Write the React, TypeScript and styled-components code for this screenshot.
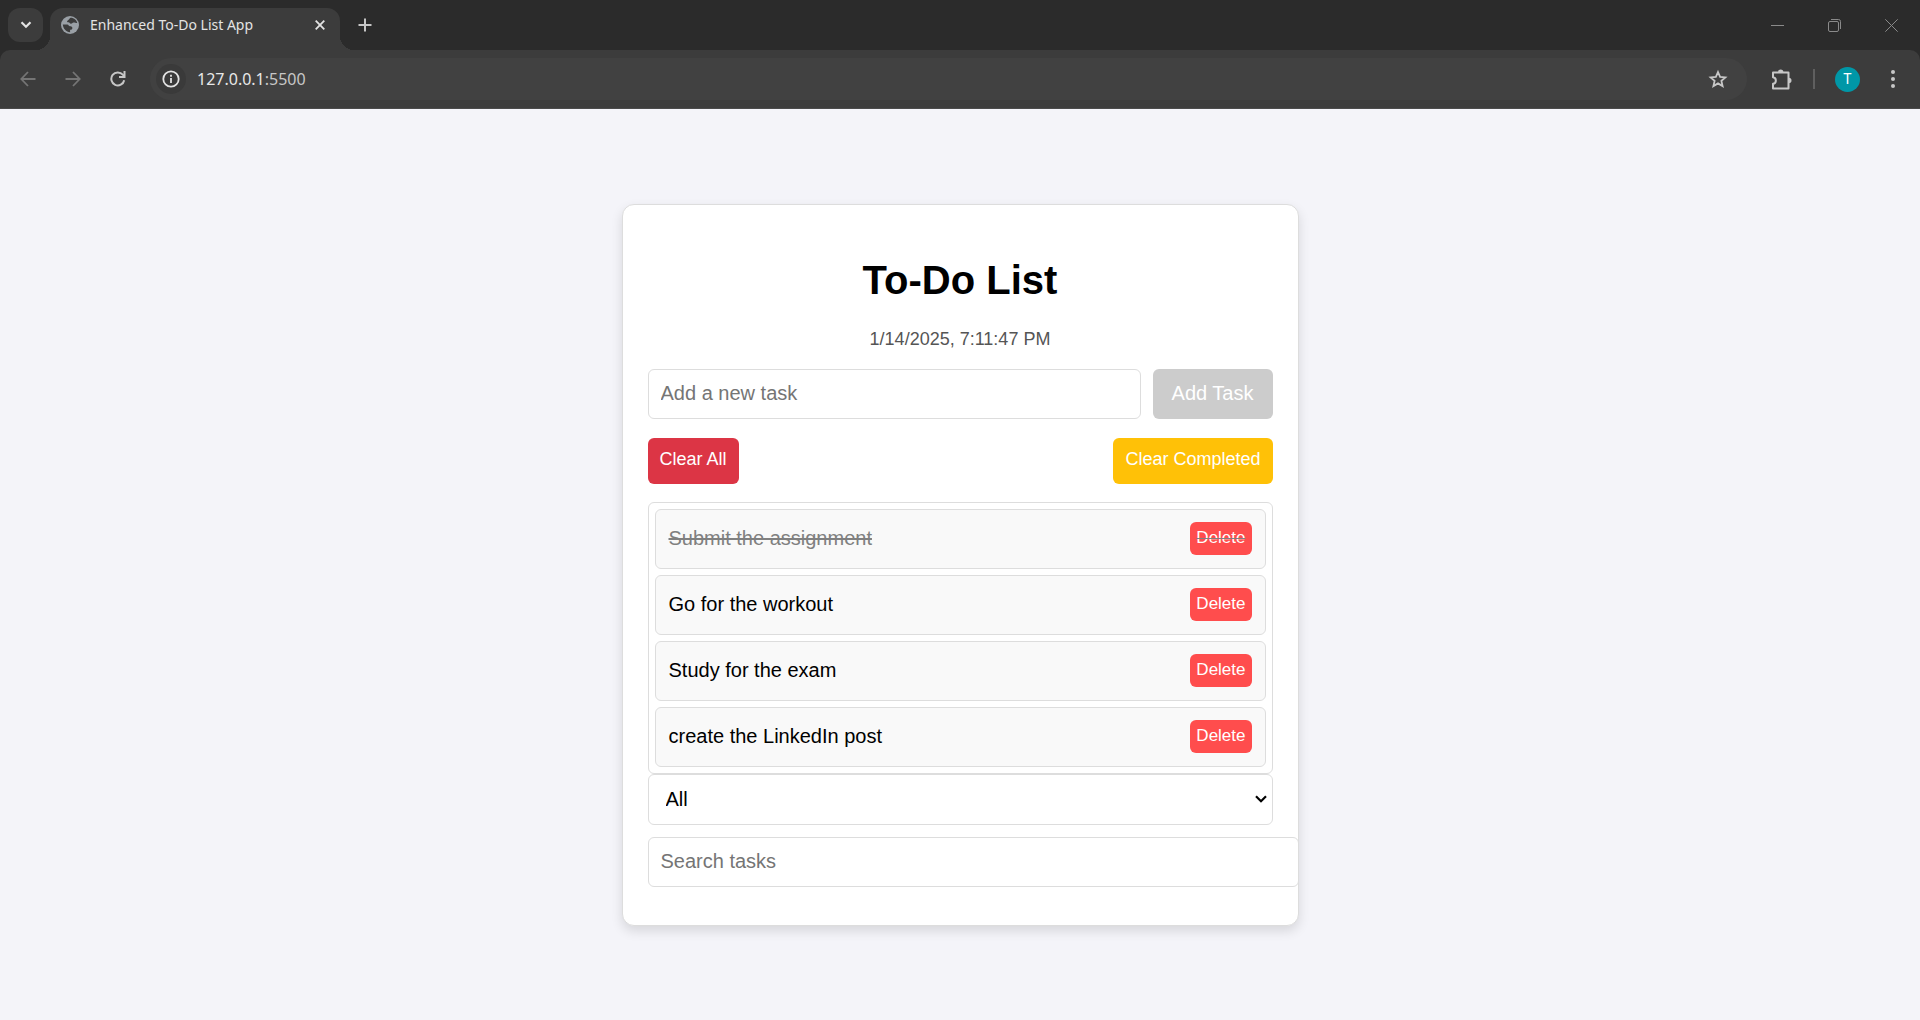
import React, { useState } from "react";
import styled, { createGlobalStyle } from "styled-components";

const uiFont = `"Noto Sans", "Open Sans", sans-serif`;
const pageFont = `"Liberation Sans", Arial, sans-serif`;

const GlobalStyle = createGlobalStyle`
  *, *::before, *::after { box-sizing: border-box; }
  body { margin: 0; background: #f4f4f9; font-family: ${pageFont}; }
  button, input, select { font-family: inherit; margin: 0; }
`;

const Browser = styled.div`
  min-height: 100vh;
  display: flex;
  flex-direction: column;
`;

const ChromeHeader = styled.header`
  background: #2b2b2b;
  font-family: ${uiFont};
`;

const TabStrip = styled.div`
  height: 50px;
  padding: 8px 0 0 8px;
  display: flex;
  align-items: flex-start;
`;

const ChromeButton = styled.button`
  border: 0;
  padding: 0;
  background: transparent;
  color: #c7c7c7;
  display: flex;
  align-items: center;
  justify-content: center;
`;

const TabSearch = styled(ChromeButton)`
  width: 35px;
  height: 34px;
  border-radius: 12px;
  background: #3c3c3c;
  color: #e3e3e3;
`;

const Tab = styled.div`
  position: relative;
  margin-left: 7px;
  width: 290px;
  height: 42px;
  padding: 0 10px 8px 11px;
  border-radius: 13px 13px 0 0;
  background: #3c3c3c;
  color: #e3e3e3;
  display: flex;
  align-items: center;
  gap: 11px;
  &::before,
  &::after {
    content: "";
    position: absolute;
    bottom: 0;
    width: 14px;
    height: 14px;
  }
  &::before {
    left: -14px;
    background: radial-gradient(circle at 0 0, transparent 14px, #3c3c3c 14px);
  }
  &::after {
    right: -14px;
    background: radial-gradient(circle at 100% 0, transparent 14px, #3c3c3c 14px);
  }
`;

const TabTitle = styled.span`
  flex: 1;
  font-size: 14px;
  line-height: 20px;
  white-space: nowrap;
`;

const TabClose = styled(ChromeButton)`
  width: 20px;
  height: 20px;
  color: #e3e3e3;
`;

const NewTab = styled(ChromeButton)`
  width: 34px;
  height: 34px;
  margin-left: 8px;
`;

const WindowControls = styled.div`
  margin-left: auto;
  display: flex;
`;

const WindowButton = styled(ChromeButton)`
  width: 57px;
  height: 34px;
  color: #8a8a8a;
`;

const Toolbar = styled.div`
  height: 59px;
  padding: 0 10px;
  border-radius: 10px 10px 0 0;
  border-bottom: 1px solid #4a4a4a;
  background: #3c3c3c;
  display: flex;
  align-items: center;
`;

const NavButton = styled(ChromeButton)<{ $dim?: boolean }>`
  width: 35px;
  height: 35px;
  margin-right: 10px;
  color: ${(p) => (p.$dim ? "#757575" : "#c7c7c7")};
`;

const AddressBar = styled.div`
  flex: 1;
  height: 42px;
  margin: 0 17px 0 5px;
  padding: 0 12px 0 6px;
  border-radius: 21px;
  background: #414141;
  display: flex;
  align-items: center;
`;

const SiteInfo = styled(ChromeButton)`
  width: 30px;
  height: 30px;
  border-radius: 50%;
  background: #3a3a3a;
  color: #e3e3e3;
`;

const Url = styled.span`
  flex: 1;
  padding-left: 11px;
  font-size: 16px;
  line-height: 22px;
  color: #e8e8e8;
`;

const Port = styled.span`
  color: #c7c7c7;
`;

const ToolbarButton = styled(ChromeButton)`
  width: 35px;
  height: 35px;
`;

const Divider = styled.span`
  width: 2px;
  height: 20px;
  margin: 0 20px 0 14px;
  background: #5f5f5f;
`;

const Avatar = styled.button`
  width: 25px;
  height: 25px;
  margin-right: 15px;
  padding: 0;
  border: 0;
  border-radius: 50%;
  background: #0097a7;
  color: #fff;
  font: 14px/25px Roboto, sans-serif;
  text-align: center;
`;

const Page = styled.main`
  flex: 1;
  display: flex;
  align-items: center;
  justify-content: center;
`;

const Card = styled.section`
  width: 677px;
  max-width: 100%;
  padding: 25px;
  border: 1px solid #ddd;
  border-radius: 12px;
  background: #fff;
  box-shadow: 0 5px 12px rgba(0, 0, 0, 0.12);
`;

const Title = styled.h1`
  margin: 27px 0 26px;
  font-size: 40px;
  line-height: 46px;
  text-align: center;
`;

const Clock = styled.time`
  display: block;
  margin-bottom: 19px;
  font-size: 18px;
  line-height: 21px;
  text-align: center;
  color: #555;
`;

const TaskForm = styled.form`
  display: flex;
  gap: 12px;
  margin-bottom: 19px;
`;

const TextField = styled.input`
  height: 50px;
  padding: 0 12px;
  border: 1px solid #ddd;
  border-radius: 6px;
  background: #fff;
  font-size: 20px;
  color: #000;
  &::placeholder { color: #757575; }
`;

const TaskField = styled(TextField)`
  flex: 1;
  min-width: 0;
`;

const SearchField = styled(TextField)`
  display: block;
  box-sizing: content-box;
  width: 100%;
  height: 48px;
  margin: 12px 0 13px;
`;

const Button = styled.button`
  border: 0;
  border-radius: 6px;
  color: #fff;
`;

const AddButton = styled(Button)`
  width: 120px;
  height: 50px;
  background: #28a745;
  font-size: 20px;
  &:disabled { background: #ccc; }
`;

const Actions = styled.div`
  display: flex;
  justify-content: space-between;
  margin-bottom: 18px;
`;

const ActionButton = styled(Button)<{ $color: string }>`
  height: 46px;
  padding: 0 12px 2px;
  background: ${(p) => p.$color};
  font-size: 18px;
`;

const TaskList = styled.ul`
  margin: 0;
  padding: 6px;
  border: 1px solid #ddd;
  border-radius: 6px;
  list-style: none;
  display: grid;
  gap: 6px;
`;

const TaskItem = styled.li`
  height: 60px;
  padding: 0 13px;
  border: 1px solid #ddd;
  border-radius: 6px;
  background: #f9f9f9;
  display: flex;
  align-items: center;
  justify-content: space-between;
`;

const TaskText = styled.span<{ $done: boolean }>`
  font-size: 20px;
  color: ${(p) => (p.$done ? "gray" : "#000")};
  text-decoration: ${(p) => (p.$done ? "line-through" : "none")};
`;

const DeleteButton = styled(Button)<{ $done: boolean }>`
  height: 33px;
  padding: 0 6px 2px;
  background: #ff4d4d;
  font-size: 17px;
  text-decoration: ${(p) => (p.$done ? "line-through 1px gray" : "none")};
`;

const FilterBox = styled.div`
  display: grid;
  align-items: center;
  & > * { grid-area: 1 / 1; }
`;

const Filter = styled.select`
  width: 100%;
  height: 51px;
  padding: 0 17px;
  border: 1px solid #ddd;
  border-radius: 6px;
  background: #fff;
  color: #000;
  font-size: 20px;
  appearance: none;
`;

const FilterArrow = styled.svg`
  justify-self: end;
  margin-right: 6px;
  pointer-events: none;
`;

type Task = { text: string; done: boolean };

const initialTasks: Task[] = [
  { text: "Submit the assignment", done: true },
  { text: "Go for the workout", done: false },
  { text: "Study for the exam", done: false },
  { text: "create the LinkedIn post", done: false },
];

function BrowserChrome() {
  return (
    <ChromeHeader>
      <TabStrip>
        <TabSearch aria-label="Search tabs">
          <svg width="12" height="8" viewBox="0 0 12 8" fill="none" stroke="currentColor" strokeWidth="2.2">
            <path d="M1.5 1.2 6 5.7l4.5-4.5" />
          </svg>
        </TabSearch>
        <Tab>
          <svg width="18" height="18" viewBox="0 0 18 18">
            <circle cx="9" cy="9" r="9" fill="#9aa0a6" />
            <path
              d="M9.5 1.8C8 3 8.300 3.800 6.800 4.400 5.500 5 6 6.300 7.400 6.300c1.500 0 1.200 1.500 2.600 1.500 1.300 0 1.200-1.300 2.600-1.300 1.200 0 2.200.5 3.600.6-.2-2.600-2.900-5.300-6.700-5.300zM1.800 8.400c.4 4.200 3.300 7.400 7.300 7.800v-2.400c1.300 0 2.300-.6 2.300-1.900 0-1.200-1-1.700-2.400-1.700-1.300 0-1.300-1.800-2.700-1.800z"
              fill="#3c3c3c"
            />
          </svg>
          <TabTitle>Enhanced To-Do List App</TabTitle>
          <TabClose aria-label="Close tab">
            <svg width="10" height="10" viewBox="0 0 10 10" stroke="currentColor" strokeWidth="1.8">
              <path d="M.7.7l8.6 8.6M9.3.7.7 9.3" />
            </svg>
          </TabClose>
        </Tab>
        <NewTab aria-label="New tab">
          <svg width="14" height="14" viewBox="0 0 14 14" stroke="currentColor" strokeWidth="2">
            <path d="M7 .5v13M.5 7h13" />
          </svg>
        </NewTab>
        <WindowControls>
          <WindowButton aria-label="Minimize">
            <svg width="13" height="13" stroke="currentColor"><path d="M0 6.5h13" /></svg>
          </WindowButton>
          <WindowButton aria-label="Restore">
            <svg width="13" height="13" fill="none" stroke="currentColor">
              <rect x=".5" y="2.5" width="10" height="10" rx="1.5" />
              <path d="M3 .5h7.5a2 2 0 0 1 2 2V10" />
            </svg>
          </WindowButton>
          <WindowButton aria-label="Close">
            <svg width="13" height="13" stroke="currentColor"><path d="M.3.3l12.4 12.4M12.7.3.3 12.7" /></svg>
          </WindowButton>
        </WindowControls>
      </TabStrip>
      <Toolbar>
        <NavButton aria-label="Back" $dim>
          <svg width="16" height="16" viewBox="0 0 16 16" fill="none" stroke="currentColor" strokeWidth="1.8">
            <path d="M15.5 8H1.500M8 1 1.300 8 8 15" />
          </svg>
        </NavButton>
        <NavButton aria-label="Forward" $dim>
          <svg width="16" height="16" viewBox="0 0 16 16" fill="none" stroke="currentColor" strokeWidth="1.8">
            <path d="M.5 8h14M8 1l6.700 7L8 15" />
          </svg>
        </NavButton>
        <NavButton aria-label="Reload">
          <svg width="16" height="16" viewBox="0 0 16 16" fill="none" stroke="currentColor" strokeWidth="2">
            <path d="M14.2 9.200A6.500 6.500 0 1 1 12.800 3.700L14 5" />
            <path d="M14.500 0v6H9" />
          </svg>
        </NavButton>
        <AddressBar>
          <SiteInfo aria-label="Site information">
            <svg width="18" height="18" viewBox="0 0 18 18" fill="none" stroke="currentColor" strokeWidth="1.8">
              <circle cx="9" cy="9" r="7.7" />
              <path d="M9 8v5M9 4.800v1.900" />
            </svg>
          </SiteInfo>
          <Url>127.0.0.1<Port>:5500</Port></Url>
          <ToolbarButton aria-label="Bookmark this page">
            <svg width="20" height="20" viewBox="0 0 20 20" fill="none" stroke="currentColor" strokeWidth="1.8">
              <path d="m10 3 2.100 4.900 5.300.5-4 3.500 1.200 5.200-4.600-2.700-4.600 2.700 1.200-5.200-4-3.500 5.300-.5z" />
            </svg>
          </ToolbarButton>
        </AddressBar>
        <ToolbarButton aria-label="Extensions">
          <svg width="21" height="21" viewBox="0 0 21 21" fill="none" stroke="currentColor" strokeWidth="2" strokeLinejoin="round">
            <path d="M2 3.500h15.500v16H2V14.800c3.800-.4 3.800-6.200 0-6.600z" />
            <path d="M7 3.200a2.700 2.700 0 0 1 5.400 0zM17.800 8.800a2.700 2.700 0 0 1 0 5.400z" fill="currentColor" stroke="none" />
          </svg>
        </ToolbarButton>
        <Divider />
        <Avatar aria-label="Profile">T</Avatar>
        <ToolbarButton aria-label="Browser menu">
          <svg width="4" height="18" viewBox="0 0 4 18" fill="currentColor">
            <circle cx="2" cy="2" r="2" />
            <circle cx="2" cy="9" r="2" />
            <circle cx="2" cy="16" r="2" />
          </svg>
        </ToolbarButton>
      </Toolbar>
    </ChromeHeader>
  );
}

export default function App() {
  const [tasks, setTasks] = useState(initialTasks);
  const [draft, setDraft] = useState("");
  const [filter, setFilter] = useState("All");
  const [query, setQuery] = useState("");

  const visible = tasks.filter(
    (t) =>
      (filter === "All" || (filter === "Completed") === t.done) &&
      t.text.toLowerCase().includes(query.toLowerCase())
  );

  return (
    <Browser>
      <GlobalStyle />
      <BrowserChrome />
      <Page>
        <Card>
          <Title>To-Do List</Title>
          <Clock>1/14/2025, 7:11:47 PM</Clock>
          <TaskForm
            onSubmit={(e) => {
              e.preventDefault();
              setTasks([...tasks, { text: draft, done: false }]);
              setDraft("");
            }}
          >
            <TaskField
              aria-label="New task"
              placeholder="Add a new task"
              value={draft}
              onChange={(e) => setDraft(e.target.value)}
            />
            <AddButton disabled={!draft.trim()}>Add Task</AddButton>
          </TaskForm>
          <Actions>
            <ActionButton $color="#dc3545" onClick={() => setTasks([])}>Clear All</ActionButton>
            <ActionButton $color="#ffc107" onClick={() => setTasks(tasks.filter((t) => !t.done))}>
              Clear Completed
            </ActionButton>
          </Actions>
          <TaskList>
            {visible.map((task) => (
              <TaskItem key={task.text}>
                <TaskText $done={task.done}>{task.text}</TaskText>
                <DeleteButton $done={task.done} onClick={() => setTasks(tasks.filter((t) => t !== task))}>
                  Delete
                </DeleteButton>
              </TaskItem>
            ))}
          </TaskList>
          <FilterBox>
            <Filter aria-label="Filter tasks" value={filter} onChange={(e) => setFilter(e.target.value)}>
              <option>All</option>
              <option>Completed</option>
              <option>Pending</option>
            </Filter>
            <FilterArrow width="12" height="8" viewBox="0 0 12 8" fill="none" stroke="#000" strokeWidth="2.2">
              <path d="M1 1.2 6 6.2l5-5" />
            </FilterArrow>
          </FilterBox>
          <SearchField
            aria-label="Search tasks"
            placeholder="Search tasks"
            value={query}
            onChange={(e) => setQuery(e.target.value)}
          />
        </Card>
      </Page>
    </Browser>
  );
}
